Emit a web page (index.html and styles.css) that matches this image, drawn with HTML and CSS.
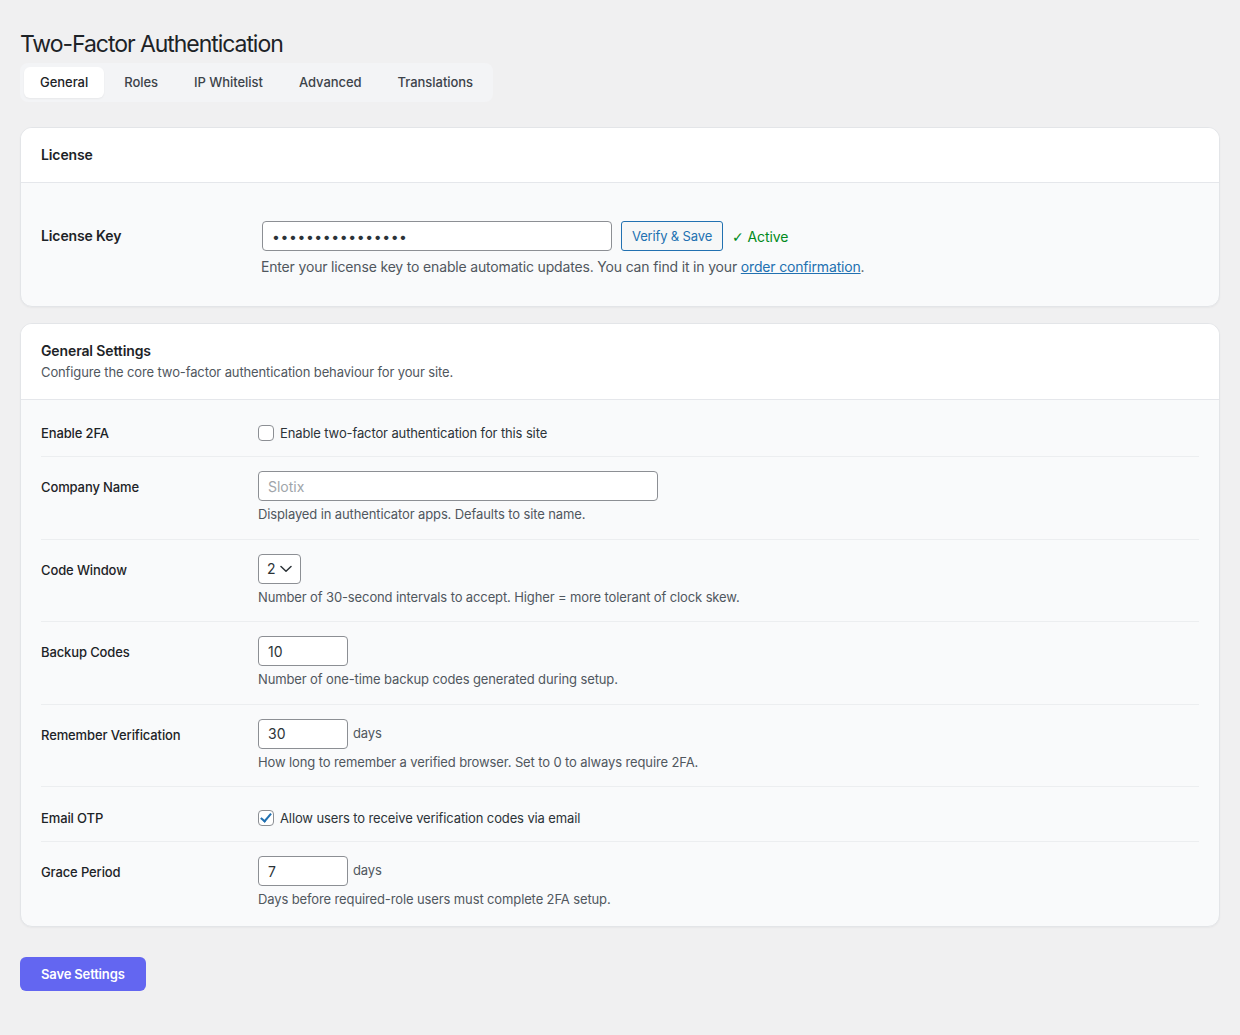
FILE: index.html
```html
<!DOCTYPE html>
<html lang="en">
<head>
    <meta charset="UTF-8">
    <meta name="viewport" content="width=device-width, initial-scale=1.0">
    <title>Two-Factor Authentication</title>
    <link rel="stylesheet" href="styles.css">
</head>
<body>
    <div class="wrap">
        <h1>Two-Factor Authentication</h1>

        <nav class="tabs">
            <a class="tab active" href="#">General</a>
            <a class="tab" href="#">Roles</a>
            <a class="tab" href="#">IP Whitelist</a>
            <a class="tab" href="#">Advanced</a>
            <a class="tab" href="#">Translations</a>
        </nav>

        <!-- License -->
        <section class="card">
            <div class="card-head">
                <h2>License</h2>
            </div>
            <div class="card-body license-body">
                <div class="license-row">
                    <label class="license-label" for="license-key">License Key</label>
                    <div class="field">
                        <div class="inline">
                            <input type="password" id="license-key" class="input input-license" value="abcdefghijklmnop">
                            <button class="btn-outline">Verify &amp; Save</button>
                            <span class="status-active"><span class="tick">✓</span> Active</span>
                        </div>
                        <p class="license-desc">Enter your license key to enable automatic updates. You can find it in your <a href="#">order confirmation</a>.</p>
                    </div>
                </div>
            </div>
        </section>

        <!-- General settings -->
        <section class="card">
            <div class="card-head">
                <h2>General Settings</h2>
                <p class="head-desc">Configure the core two-factor authentication behaviour for your site.</p>
            </div>
            <div class="card-body settings-body">
                <div class="row row-check">
                    <div class="row-label">Enable 2FA</div>
                    <label class="check">
                        <input type="checkbox">
                        Enable two-factor authentication for this site
                    </label>
                </div>

                <div class="row">
                    <div class="row-label">Company Name</div>
                    <div class="field">
                        <input type="text" class="input input-wide" placeholder="Slotix">
                        <p class="desc">Displayed in authenticator apps. Defaults to site name.</p>
                    </div>
                </div>

                <div class="row">
                    <div class="row-label">Code Window</div>
                    <div class="field">
                        <div class="select">
                            <span>2</span>
                            <svg width="12" height="8" viewBox="0 0 12 8"><path d="M1 1.5 6 6.2l5-4.7" fill="none" stroke="#2c3338" stroke-width="1.5" stroke-linecap="round" stroke-linejoin="round"/></svg>
                        </div>
                        <p class="desc">Number of 30-second intervals to accept. Higher = more tolerant of clock skew.</p>
                    </div>
                </div>

                <div class="row">
                    <div class="row-label">Backup Codes</div>
                    <div class="field">
                        <input type="number" class="input input-small" value="10">
                        <p class="desc">Number of one-time backup codes generated during setup.</p>
                    </div>
                </div>

                <div class="row">
                    <div class="row-label">Remember Verification</div>
                    <div class="field">
                        <div class="inline">
                            <input type="number" class="input input-small" value="30">
                            <span class="suffix">days</span>
                        </div>
                        <p class="desc">How long to remember a verified browser. Set to 0 to always require 2FA.</p>
                    </div>
                </div>

                <div class="row row-check">
                    <div class="row-label">Email OTP</div>
                    <label class="check">
                        <input type="checkbox" checked>
                        Allow users to receive verification codes via email
                    </label>
                </div>

                <div class="row">
                    <div class="row-label">Grace Period</div>
                    <div class="field">
                        <div class="inline">
                            <input type="number" class="input input-small" value="7">
                            <span class="suffix">days</span>
                        </div>
                        <p class="desc">Days before required-role users must complete 2FA setup.</p>
                    </div>
                </div>
            </div>
        </section>

        <button class="btn-primary">Save Settings</button>
    </div>
</body>
</html>
```

FILE: styles.css
```css
body {
    margin: 0;
    background: #f0f0f1;
    color: #1d2327;
    font-family: Inter, "Noto Sans", sans-serif;
    font-size: 13px;
    letter-spacing: -0.12px;
}

.wrap {
    padding: 30px 20px 40px;
}

h1 {
    margin: 0 0 4px;
    font-size: 23px;
    font-weight: 400;
    line-height: 29px;
    letter-spacing: -1.05px;
}

/* Tabs */
.tabs {
    display: inline-flex;
    gap: 4px;
    padding: 4px;
    border-radius: 8px;
    background: #f3f4f6;
}

.tab {
    padding: 7px 16px;
    line-height: 17px;
    font-size: 13px;
    font-weight: 500;
    color: #3c434a;
    text-decoration: none;
    border-radius: 6px;
    letter-spacing: -0.04px;
}

.tab.active {
    background: #fff;
    color: #1d2327;
    box-shadow: 0 1px 2px rgba(0, 0, 0, 0.05);
}

/* Cards */
.card {
    margin-top: 25px;
    background: #f9fafb;
    border: 1px solid #e3e5e8;
    border-radius: 12px;
    box-shadow: 0 1px 2px rgba(0, 0, 0, 0.04);
    overflow: hidden;
}

.card + .card {
    margin-top: 16px;
}

.card-head {
    background: #fff;
    padding: 17px 20px 18px;
    border-bottom: 1px solid #e5e7eb;
}

.card-head h2 {
    margin: 0;
    font-size: 14px;
    font-weight: 600;
    line-height: 19px;
}

.card-head .head-desc {
    margin: 3px 0 0;
    font-size: 13px;
    line-height: 18px;
    color: #50575e;
}

.license-body {
    padding: 38px 20px 29px;
}

.license-row {
    display: grid;
    grid-template-columns: 221px 1fr;
}

.license-label {
    font-size: 14px;
    font-weight: 600;
    line-height: 30px;
}

.inline {
    display: flex;
    align-items: center;
    gap: 9px;
}

.input {
    box-sizing: border-box;
    height: 30px;
    padding: 0 9px;
    border: 1px solid #8c8f94;
    border-radius: 4px;
    background: #fff;
    color: #2c3338;
    font-family: inherit;
    font-size: 14px;
    outline: none;
}

.input::placeholder {
    color: #a0a5aa;
}

.input-license {
    width: 350px;
    letter-spacing: 0.6px;
}

.input-wide {
    width: 400px;
}

.input-small {
    width: 90px;
    -moz-appearance: textfield;
}

.input-small::-webkit-inner-spin-button,
.input-small::-webkit-outer-spin-button {
    -webkit-appearance: none;
    margin: 0;
}

.btn-outline {
    height: 30px;
    padding: 0 10px;
    border: 1px solid #2271b1;
    border-radius: 3px;
    background: #f6f7f7;
    color: #2271b1;
    font-family: inherit;
    font-size: 13px;
    letter-spacing: -0.15px;
}

.status-active {
    color: #008a20;
    font-size: 14px;
}

.tick {
    font-family: "DejaVu Sans", sans-serif;
    font-size: 14px;
}

.license-desc {
    margin: 6px 0 0 -1px;
    font-size: 14px;
    line-height: 20px;
    color: #50575e;
    letter-spacing: -0.17px;
}

.license-desc a {
    color: #2271b1;
}

/* Settings rows */
.settings-body {
    padding: 0 20px 2px;
}

.row {
    display: grid;
    grid-template-columns: 217px 1fr;
    padding: 14px 0 15.5px;
    border-bottom: 1px solid #eceef0;
}

.row:last-child {
    border-bottom: none;
}

.row-check {
    padding: 19px 0 11px;
    align-items: center;
}

.row-check:first-child {
    padding-top: 21px;
}

.row-label {
    font-size: 13px;
    font-weight: 500;
    line-height: 32px;
    color: #1d2327;
}

.row-check .row-label {
    line-height: 24px;
}

.desc {
    margin: 4px 0 0;
    font-size: 13px;
    line-height: 18px;
    color: #50575e;
}

.suffix {
    margin-left: -4px;
    margin-top: -2px;
    color: #50575e;
}

.select {
    box-sizing: border-box;
    display: inline-flex;
    align-items: center;
    gap: 5px;
    height: 30px;
    padding: 0 8px;
    border: 1px solid #8c8f94;
    border-radius: 4px;
    background: #fff;
    font-size: 14px;
    color: #2c3338;
}

/* Checkbox */
.check {
    display: flex;
    align-items: center;
    gap: 6px;
    font-size: 13px;
    line-height: 24px;
    color: #2c3338;
}

.check input {
    -webkit-appearance: none;
    appearance: none;
    position: relative;
    width: 16px;
    height: 16px;
    margin: 0;
    border: 1px solid #8c8f94;
    border-radius: 4px;
    background: #fff;
}

.check input:checked::before {
    content: "";
    position: absolute;
    left: 4px;
    top: 0;
    width: 4px;
    height: 9px;
    border: solid #2271b1;
    border-width: 0 2px 2px 0;
    transform: rotate(40deg);
}

.btn-primary {
    margin-top: 30px;
    height: 34px;
    padding: 0 21px;
    border: none;
    border-radius: 6px;
    background: #6366f1;
    color: #fff;
    font-family: inherit;
    font-size: 13px;
    font-weight: 600;
    letter-spacing: -0.15px;
}
```
